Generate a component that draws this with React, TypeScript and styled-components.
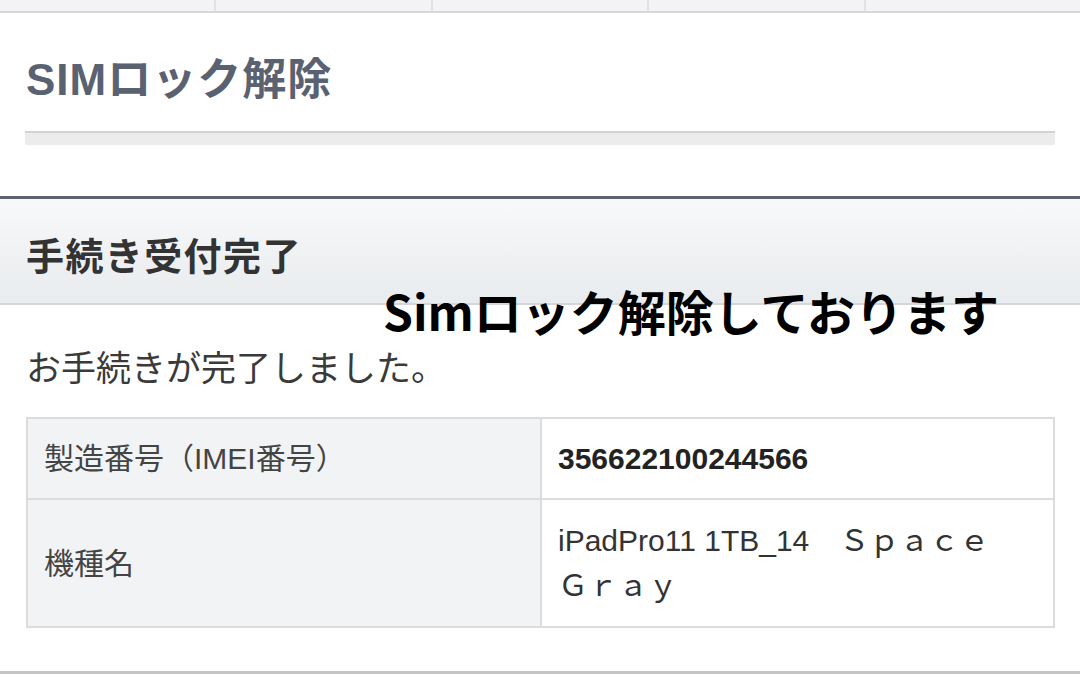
import React from "react";
import styled, { createGlobalStyle } from "styled-components";

const GlobalStyle = createGlobalStyle`
  html, body { margin: 0; padding: 0; background: #ffffff; }
  body { font-family: "Liberation Sans", "Noto Sans CJK JP", sans-serif; }
  * { box-sizing: border-box; }
`;

const Page = styled.div`
  position: relative;
  width: 1080px;
  height: 674px;
  overflow: hidden;
  background: #ffffff;
  display: flex;
  flex-direction: column;
`;

const TabBar = styled.div`
  display: flex;
  height: 13px;
  border-bottom: 2px solid #d7d7da;
  background: #f3f3f5;
`;

const Tab = styled.div`
  flex: 1;
  border-right: 2px solid #e2e2e5;
  &:last-child { border-right: none; }
`;

const PageTitle = styled.h1`
  margin: 41px 0 0 26px;
  height: 52px;
  font-family: "Liberation Sans", "Noto Sans CJK JP", sans-serif;
  font-size: 44px;
  line-height: 52px;
  font-weight: 700;
  color: #5a6170;
  letter-spacing: 1px;
`;

const TitleRule = styled.div`
  margin: 25px 25px 0 25px;
  height: 14px;
  border-top: 2px solid #d3d3d3;
  background: #ececec;
`;

const SectionHeader = styled.div`
  margin-top: 51px;
  height: 109px;
  border-top: 3px solid #5a6270;
  border-bottom: 2px solid #d4d6d8;
  background: linear-gradient(to bottom, #f8f9fa 0%, #eef0f2 60%, #e9ecee 100%);
  display: flex;
  align-items: center;
  padding: 6px 0 0 26px;
`;

const SectionTitle = styled.h2`
  margin: 0;
  font-family: "Noto Sans CJK JP", sans-serif;
  font-size: 38px;
  line-height: 46px;
  font-weight: 700;
  color: #333333;
  letter-spacing: 1.4px;
`;

const Message = styled.p`
  margin: 39px 0 0 26px;
  font-family: "Noto Sans CJK JP", sans-serif;
  font-size: 35px;
  line-height: 44px;
  font-weight: 400;
  color: #3a3a3a;
`;

const InfoTable = styled.table`
  margin: 29px 0 0 26px;
  width: 1029px;
  border-collapse: collapse;
  border: 2px solid #dcdcdc;
  table-layout: fixed;
`;

const Row = styled.tr`
  border-bottom: 2px solid #dcdcdc;
`;

const HeadCell = styled.th`
  width: 514px;
  background: #f2f3f5;
  border-right: 2px solid #dcdcdc;
  padding: 16px 16px;
  text-align: left;
  vertical-align: middle;
  font-family: "Liberation Sans", "Noto Sans CJK JP", sans-serif;
  font-size: 30px;
  line-height: 45px;
  font-weight: 400;
  color: #444444;
`;

const ValueCell = styled.td<{ $bold?: boolean; $tall?: boolean }>`
  background: #ffffff;
  padding: ${(p) => (p.$tall ? "18px" : "17px")} 16px;
  text-align: left;
  vertical-align: middle;
  font-family: "Liberation Sans", "Noto Sans CJK JP", sans-serif;
  font-size: 30px;
  line-height: 45px;
  font-weight: ${(p) => (p.$bold ? 700 : 400)};
  color: ${(p) => (p.$bold ? "#222222" : "#333333")};
`;

const BottomRule = styled.div`
  margin-top: auto;
  height: 3px;
  background: #c4c4c4;
`;

const Overlay = styled.div`
  position: absolute;
  left: 383px;
  top: 282px;
  font-family: "Noto Sans CJK JP", sans-serif;
  font-size: 48px;
  line-height: 56px;
  font-weight: 700;
  color: #000000;
  white-space: nowrap;
`;

export default function App() {
  return (
    <>
      <GlobalStyle />
      <Page>
        <TabBar>
          <Tab />
          <Tab />
          <Tab />
          <Tab />
          <Tab />
        </TabBar>
        <PageTitle>SIMロック解除</PageTitle>
        <TitleRule />
        <SectionHeader>
          <SectionTitle>手続き受付完了</SectionTitle>
        </SectionHeader>
        <Message>お手続きが完了しました。</Message>
        <InfoTable>
          <tbody>
            <Row>
              <HeadCell>製造番号（IMEI番号）</HeadCell>
              <ValueCell $bold>356622100244566</ValueCell>
            </Row>
            <Row>
              <HeadCell>機種名</HeadCell>
              <ValueCell $tall>iPadPro11 1TB_14　Ｓｐａｃｅ　Ｇｒａｙ</ValueCell>
            </Row>
          </tbody>
        </InfoTable>
        <BottomRule />
        <Overlay>Simロック解除しております</Overlay>
      </Page>
    </>
  );
}
